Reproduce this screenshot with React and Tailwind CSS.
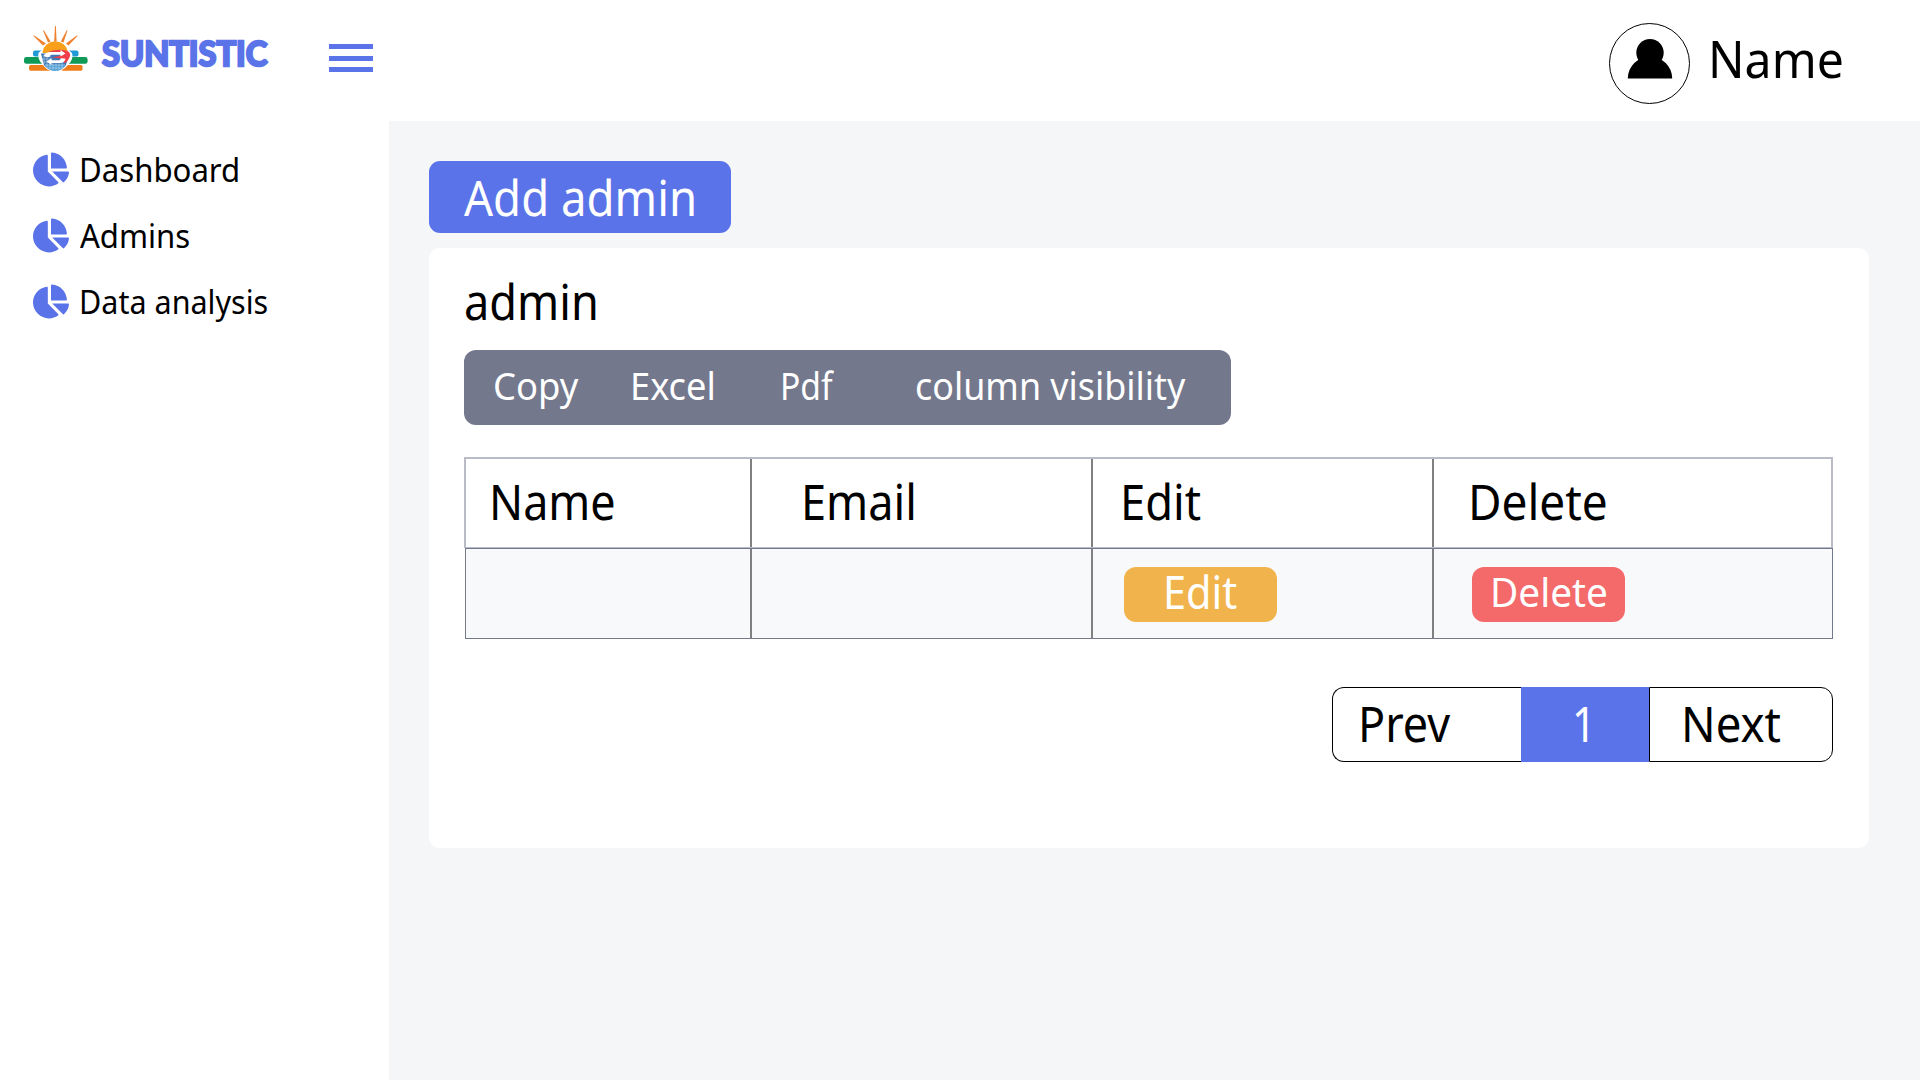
import { FaChartPie } from "react-icons/fa";

function Label({ className = "", children }) {
  return <span className={"block origin-left whitespace-nowrap leading-none " + className}>{children}</span>;
}

function SunLogo() {
  return (
    <svg width="66" height="48" viewBox="0 0 66 48" className="block">
      <g fill="#f07f2e">
        <path d="M30.2 16.500 31 1h.9L32.600 16.500z" />
        <path d="M24 17.500 19 5.600l.8-.3L26.600 16.500z" />
        <path d="M39.500 17.500l4-11.900-.8-.3L36.800 16.500z" />
        <path d="M19 20.500 9.300 10.800l.6-.6L21.800 18.500z" />
        <path d="M44.500 20.500l9.200-9.700-.6-.6L42 18.500z" />
      </g>
      <rect x="9" y="25.500" width="16" height="6" rx="2" fill="#1f9ad6" />
      <rect x="39" y="25.500" width="15.500" height="6" rx="2" fill="#1f9ad6" />
      <rect x="0" y="32" width="24" height="6.800" rx="2.400" fill="#0f9a58" />
      <rect x="40" y="32" width="23.600" height="6.800" rx="2.400" fill="#0f9a58" />
      <rect x="5" y="40" width="22" height="5.800" rx="1.800" fill="#ef7d1a" />
      <rect x="37" y="40" width="21.600" height="5.800" rx="1.800" fill="#ef7d1a" />
      <path d="M14.500 28Q31 10 48 28q2 6-4 12-5.500 6.500-13 6.500T19 40q-6-6-4.500-12z" fill="#fff" />
      <path d="M18.500 27a12.800 12.500 0 0 1 25.200-1l.5 2H19z" fill="#f9a01b" />
      <path d="M17 28.500h28l-3 11.500q-4 5.500-11 5.500T20 40z" fill="#3f76b4" />
      <path d="M24 27q11-4 19.500-1 4 2.500 2 6.500-1.800 4.300-5 6-1-4.500-5-5.300l-8-1q9-.5 9-2.700-3-2-12.500-2.500z" fill="#ee3f4a" />
      <path d="M20.500 39.500h21.200Q38.500 45.800 31.500 45.800t-11-6.300z" fill="#4b9ad2" />
      <path d="M20 30v9M23 30v13M26 37v7.500M29 37v8M32 37v8.500M35 37v8M38 37v6.500M18 34h10M20 37h20M21 40h20M23 43h17" stroke="#cfe4f5" strokeWidth=".5" fill="none" />
      <path d="M19.500 31q2-4 7-4h10v-2l5 3.500-5 3v-1.800h-8.500q-2.500.3-1.400 1.800-4.300 1.500-7.100-.5z" fill="#fff" />
      <path d="M41.500 34q-1.500 4.200-5.500 4h-8.500v1.900l-5-3.300 5-3.300v2h6.700q2.600 0 2.300-1.800 3-.8 5 .5z" fill="#fff" />
    </svg>
  );
}

function NavItem({ children }) {
  return (
    <a className="flex h-[66px] items-start pl-[33px]">
      <FaChartPie className="h-[35px] w-[36px] shrink-0 text-[#5b73e8]" />
      {children}
    </a>
  );
}

export default function App() {
  return (
    <div className="h-[1080px] w-[1920px] overflow-hidden bg-white font-['Noto_Sans',sans-serif] text-black">
      <header className="flex h-[121px] items-start">
        <div className="pl-6 pt-[25px]"><SunLogo /></div>
        <div className="w-[239px] pl-[12px] pt-[36px]">
          <Label className="scale-x-[0.96] font-['Lato',sans-serif] text-[34px] font-bold text-[#5b73e8] [-webkit-text-stroke:2.5px_#5b73e8] [stroke-linejoin:round]">SUNTISTIC</Label>
        </div>
        <div className="mt-11 flex w-11 flex-col gap-[6.500px]">
          <div className="h-[5px] bg-[#5b73e8]" />
          <div className="h-[5px] bg-[#5b73e8]" />
          <div className="h-[5px] bg-[#5b73e8]" />
        </div>
        <div className="ml-auto flex w-[311px] items-start">
          <div className="mt-[23px] flex h-[81px] w-[81px] shrink-0 justify-center rounded-full border border-black pt-[15px]">
            <svg width="46" height="40" viewBox="0 0 46 40" className="block">
              <circle cx="23" cy="13.700" r="13.700" />
              <path d="M.8 39.500a22.200 22 0 0 1 44.400 0z" />
            </svg>
          </div>
          <div className="pl-[18px] pt-[33px]"><Label className="scale-x-[0.93] text-[51.800px]">Name</Label></div>
        </div>
      </header>

      <div className="flex h-[959px]">
        <nav className="w-[389px] shrink-0 pt-[31px]">
          <NavItem><Label className="ml-[10px] mt-[2px] scale-x-[0.953] text-[32.700px]">Dashboard</Label></NavItem>
          <NavItem><Label className="ml-[10.500px] mt-[2px] scale-x-[0.951] text-[32.700px]">Admins</Label></NavItem>
          <NavItem><Label className="ml-[10px] mt-[2px] scale-x-[0.934] text-[32.700px]">Data analysis</Label></NavItem>
        </nav>

        <main className="flex-1 bg-[#f5f6f8] pl-10 pt-10">
          <button className="block h-[72px] w-[302px] rounded-[11px] bg-[#5b73e8] pl-[35px] text-left text-white">
            <Label className="scale-x-[0.93] text-[49px]">Add admin</Label>
          </button>

          <section className="mt-[15px] h-[600px] w-[1440px] rounded-[11px] bg-white px-[35px] pt-[27px]">
            <h2 className="h-[75px] pt-[2px]"><Label className="scale-x-[0.921] text-[49px]">admin</Label></h2>

            <div className="flex h-[75px] w-[767px] rounded-[12px] bg-[#74788d] pl-[29px] pt-[16.500px] text-[37.800px] text-white">
              <div className="w-[136.500px]"><Label className="scale-x-[0.963]">Copy</Label></div>
              <div className="w-[150px]"><Label className="scale-x-[0.959]">Excel</Label></div>
              <div className="w-[135.500px]"><Label className="scale-x-[0.89]">Pdf</Label></div>
              <div><Label className="scale-x-[0.949]">column visibility</Label></div>
            </div>

            <div className="mt-8 w-[1369px]">
              <div className="flex h-[91px] border-2 border-b border-[#b9bbc6] text-[49px]">
                <div className="w-[286px] border-r-2 border-[#808080] pl-[22.500px] pt-[17.500px]"><Label className="scale-x-[0.917]">Name</Label></div>
                <div className="w-[341px] border-r-2 border-[#808080] pl-[49px] pt-[17.500px]"><Label className="scale-x-[0.921]">Email</Label></div>
                <div className="w-[341px] border-r-2 border-[#808080] pl-[27px] pt-[17.500px]"><Label className="scale-x-[0.925]">Edit</Label></div>
                <div className="flex-1 pl-[34px] pt-[17.500px]"><Label className="scale-x-[0.938]">Delete</Label></div>
              </div>
              <div className="ml-px flex h-[91px] border border-[#74788d] bg-[#f8f9fb]">
                <div className="w-[286px] border-r-2 border-[#808080]" />
                <div className="w-[341px] border-r-2 border-[#808080]" />
                <div className="w-[341px] border-r-2 border-[#808080] pl-[31px] pt-[18px]">
                  <div className="h-[55px] w-[153px] rounded-[12px] bg-[#f1b44c] pl-[39px] pt-[3px] text-[44.800px] text-white">
                    <Label className="scale-x-[0.925]">Edit</Label>
                  </div>
                </div>
                <div className="pl-[38px] pt-[18px]">
                  <div className="h-[55px] w-[153px] rounded-[12px] bg-[#f46a6a] pl-[18px] pt-[5px] text-[40.600px] text-white">
                    <Label className="scale-x-[0.956]">Delete</Label>
                  </div>
                </div>
              </div>
            </div>

            <div className="ml-[868px] mt-12 flex h-[75px] w-[501px] text-[49px]">
              <div className="w-[189px] rounded-l-[12px] border border-r-0 border-black pl-[25px] pt-[11px]"><Label className="scale-x-[0.917]">Prev</Label></div>
              <div className="w-[128px] bg-[#5b73e8] pl-[51px] pt-[12px] text-white"><Label className="scale-x-[0.857]">1</Label></div>
              <div className="w-[184px] rounded-r-[12px] border border-black pl-[31px] pt-[11px]"><Label className="scale-x-[0.93]">Next</Label></div>
            </div>
          </section>
        </main>
      </div>
    </div>
  );
}
